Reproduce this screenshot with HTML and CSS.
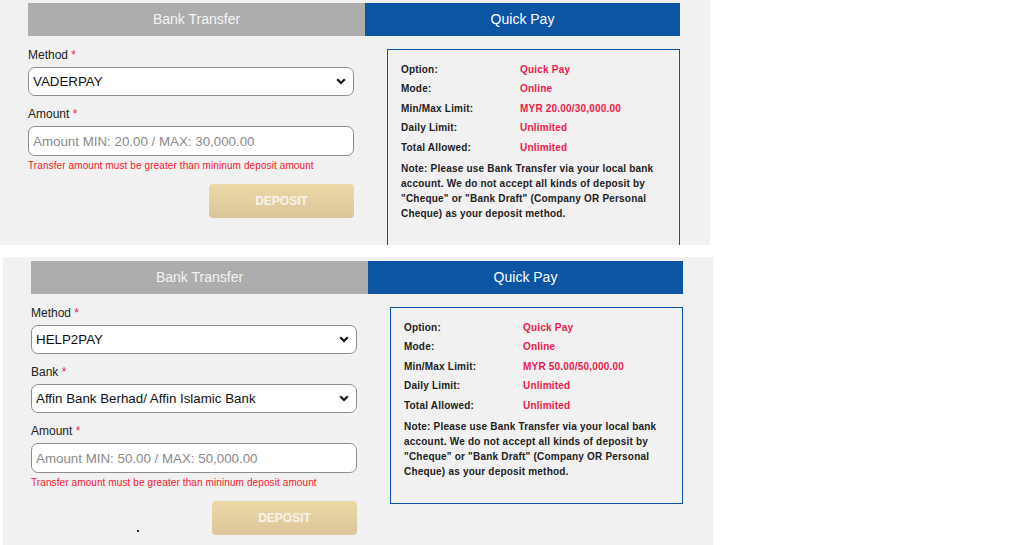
FILE: index.html
```html
<!DOCTYPE html>
<html lang="en">
<head>
<meta charset="UTF-8">
<title>Deposit</title>
<link rel="stylesheet" href="styles.css">
</head>
<body>
<!-- vaderpay -->
<div class="deposit deposit-cut">
    <div class="tabs">
        <div class="tab">Bank Transfer</div>
        <div class="tab active">Quick Pay</div>
    </div>
    <div class="deposit-body">
        <div class="form">
            <div class="field">
                <label class="title">Method <span class="req">*</span></label>
                <div class="select-wrap">
                    <select class="ipt"><option>VADERPAY</option></select>
                    <svg class="caret" width="10" height="7" viewBox="0 0 10 7"><path d="M1.2 1.2 L5 5 L8.8 1.2" fill="none" stroke="#111" stroke-width="2.2"/></svg>
                </div>
            </div>
            <div class="field">
                <label class="title">Amount <span class="req">*</span></label>
                <input class="ipt amount" type="text" placeholder="Amount MIN: 20.00 / MAX: 30,000.00">
                <p class="error">Transfer amount must be greater than mininum deposit amount</p>
            </div>
            <div class="btn-row">
                <a class="btn" href="#">DEPOSIT</a>
            </div>
        </div>
        <div class="info">
            <div class="row"><span class="key">Option:</span><span class="val">Quick Pay</span></div>
            <div class="row"><span class="key">Mode:</span><span class="val">Online</span></div>
            <div class="row"><span class="key">Min/Max Limit:</span><span class="val">MYR 20.00/30,000.00</span></div>
            <div class="row"><span class="key">Daily Limit:</span><span class="val">Unlimited</span></div>
            <div class="row"><span class="key">Total Allowed:</span><span class="val">Unlimited</span></div>
            <p class="note">Note: Please use Bank Transfer via your local bank account. We do not accept all kinds of deposit by "Cheque" or "Bank Draft" (Company OR Personal Cheque) as your deposit method.</p>
        </div>
    </div>
</div>

<!-- help2pay -->
<div class="deposit deposit-second">
    <div class="tabs">
        <div class="tab">Bank Transfer</div>
        <div class="tab active">Quick Pay</div>
    </div>
    <div class="deposit-body">
        <div class="form">
            <div class="field">
                <label class="title">Method <span class="req">*</span></label>
                <div class="select-wrap">
                    <select class="ipt"><option>HELP2PAY</option></select>
                    <svg class="caret" width="10" height="7" viewBox="0 0 10 7"><path d="M1.2 1.2 L5 5 L8.8 1.2" fill="none" stroke="#111" stroke-width="2.2"/></svg>
                </div>
            </div>
            <div class="field">
                <label class="title">Bank <span class="req">*</span></label>
                <div class="select-wrap">
                    <select class="ipt"><option>Affin Bank Berhad/ Affin Islamic Bank</option></select>
                    <svg class="caret" width="10" height="7" viewBox="0 0 10 7"><path d="M1.2 1.2 L5 5 L8.8 1.2" fill="none" stroke="#111" stroke-width="2.2"/></svg>
                </div>
            </div>
            <div class="field">
                <label class="title">Amount <span class="req">*</span></label>
                <input class="ipt amount" type="text" placeholder="Amount MIN: 50.00 / MAX: 50,000.00">
                <p class="error">Transfer amount must be greater than mininum deposit amount</p>
            </div>
            <div class="btn-row">
                <span class="dot"></span>
                <a class="btn" href="#">DEPOSIT</a>
            </div>
        </div>
        <div class="info">
            <div class="row"><span class="key">Option:</span><span class="val">Quick Pay</span></div>
            <div class="row"><span class="key">Mode:</span><span class="val">Online</span></div>
            <div class="row"><span class="key">Min/Max Limit:</span><span class="val">MYR 50.00/50,000.00</span></div>
            <div class="row"><span class="key">Daily Limit:</span><span class="val">Unlimited</span></div>
            <div class="row"><span class="key">Total Allowed:</span><span class="val">Unlimited</span></div>
            <p class="note">Note: Please use Bank Transfer via your local bank account. We do not accept all kinds of deposit by "Cheque" or "Bank Draft" (Company OR Personal Cheque) as your deposit method.</p>
        </div>
    </div>
</div>
</body>
</html>
```

FILE: styles.css
```css
body,html{
margin: 0;
padding: 0;
font-family: "Liberation Sans", Arial, sans-serif;
background-color: #fff;
}
.deposit{
background-color: #f1f1f1;
width: 710px;
box-sizing: border-box;
padding: 4px 30px 0 28px;
overflow: hidden;
}
.deposit-cut{
margin-top: -1px;
height: 246px;
}
.deposit-second{
margin-top: 12px;
margin-left: 3px;
height: 290px;
}
.tabs{
display: grid;
grid-template-columns: 337px 315px;
height: 33px;
}
.tab{
background-color: #adadad;
color: #f4f4f4;
font-size: 14px;
line-height: 33px;
text-align: center;
}
.tab.active{
background-color: #0b55a3;
color: #fff;
}
.deposit-body{
display: flex;
gap: 33px;
}
.form{
width: 326px;
padding-top: 9px;
}
.field{
margin-bottom: 8px;
}
.title{
display: block;
box-sizing: border-box;
font-size: 12px;
line-height: 18px;
padding-top: 1px;
height: 18px;
color: #222;
margin-bottom: 4px;
}
.req{
color: #e8294a;
}
.select-wrap{
position: relative;
}
.ipt{
display: block;
width: 100%;
height: 29px;
box-sizing: border-box;
margin: 0;
padding: 0 24px 0 4px;
border: 1px solid #8d8d8d;
border-radius: 7px;
background-color: #fff;
font-family: "Liberation Sans", Arial, sans-serif;
font-size: 13.33px;
color: #111;
outline: none;
-webkit-appearance: none;
appearance: none;
}
.ipt.amount{
height: 30px;
}
.ipt::placeholder{
color: #8a8a8a;
}
.caret{
position: absolute;
right: 8px;
top: 11px;
}
.field:has(.error){
margin-bottom: 0;
}
.error{
margin: 3px 0 0;
font-size: 10px;
line-height: 14px;
letter-spacing: 0.1px;
color: #f5192d;
}
.btn-row{
position: relative;
display: flex;
justify-content: flex-end;
margin-top: 11px;
}
.btn{
display: block;
width: 145px;
height: 34px;
line-height: 34px;
text-align: center;
text-decoration: none;
font-size: 12px;
font-weight: bold;
color: #f7f3ea;
border-radius: 4px;
background: linear-gradient(#ecd9a6, #dbc59a);
}
.dot{
position: absolute;
left: 106px;
top: 29px;
width: 2px;
height: 2px;
background-color: #222;
}
.info{
margin-top: 13px;
width: 293px;
height: 197px;
box-sizing: border-box;
border: 1px solid #0b55a3;
padding: 9.5px 10px 0 13px;
font-size: 10px;
font-weight: bold;
letter-spacing: 0.2px;
color: #222;
}
.row{
display: flex;
line-height: 19.5px;
}
.key{
width: 119px;
flex-shrink: 0;
}
.val{
color: #ee1a4c;
}
.note{
margin: 4px 0 0;
line-height: 15px;
}
```
